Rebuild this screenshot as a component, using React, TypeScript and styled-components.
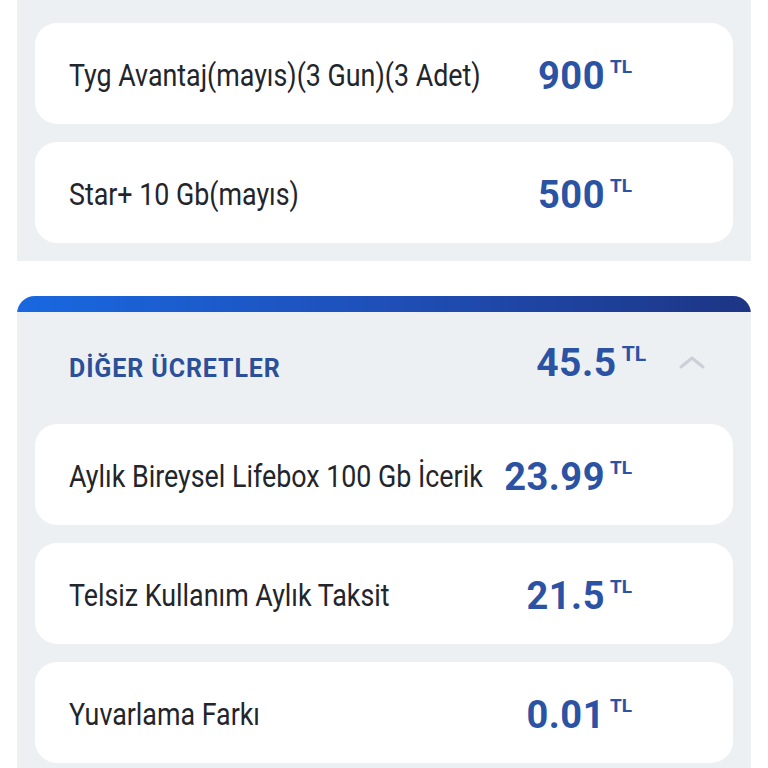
import React from "react";
import styled, { createGlobalStyle } from "styled-components";

const Global = createGlobalStyle`
  html, body { margin: 0; padding: 0; background: #ffffff; }
  body { font-family: Roboto, "Noto Sans", sans-serif; }
`;

const Page = styled.div`
  display: flex;
  flex-direction: column;
  gap: 35px;
  padding: 0 17px;
`;

const Panel = styled.section<{ $top?: boolean }>`
  background: #edf0f3;
  display: flex;
  flex-direction: column;
  border-radius: ${(p) => (p.$top ? "18px 18px 0 0" : "0")};
  overflow: hidden;
`;

const Bar = styled.div`
  height: 16px;
  background: linear-gradient(90deg, #1868e0 0%, #1f4fb8 50%, #1d3584 100%);
`;

const CardList = styled.div<{ $pt: number }>`
  display: flex;
  flex-direction: column;
  gap: 18px;
  padding: ${(p) => p.$pt}px 18px 18px;
`;

const Card = styled.div`
  background: #ffffff;
  border-radius: 22px;
  height: 101px;
  display: flex;
  align-items: center;
  padding: 0 101px 0 34px;
  box-sizing: border-box;
`;

const Label = styled.span`
  flex: 1;
  min-width: 0;
  font-family: Roboto, sans-serif;
  font-size: 31px;
  color: #22252b;
  transform: scaleX(0.865);
  transform-origin: left center;
  white-space: nowrap;
  margin-top: 3px;
`;

const Amount = styled.div<{ $shift: number }>`
  display: flex;
  align-items: flex-start;
  justify-content: flex-end;
  gap: 5px;
  color: #2b52a3;
  margin-top: ${(p) => p.$shift}px;
`;

const Number = styled.span<{ $size: number }>`
  font-family: Roboto, sans-serif;
  font-weight: 700;
  font-size: ${(p) => p.$size}px;
  letter-spacing: 0.5px;
  line-height: 1;
`;

const Unit = styled.span<{ $size: number }>`
  font-family: Roboto, sans-serif;
  font-weight: 700;
  font-size: ${(p) => p.$size}px;
  line-height: 1;
`;

const Header = styled.div`
  height: 112px;
  box-sizing: border-box;
  padding: 0 45px 4px 52px;
  display: flex;
  align-items: center;
`;

const Title = styled.h2`
  margin: 0;
  flex: 1;
  font-family: Roboto, sans-serif;
  font-weight: 700;
  font-size: 25px;
  color: #2b4f98;
  letter-spacing: 0.9px;
  margin-top: 4px;
`;

const Chevron = styled.svg`
  margin-left: 32px;
  width: 28px;
  height: 16px;
  margin-top: -8px;
`;

const Price = ({
  v,
  size = 38,
  unit = 19,
  shift = 4,
}: {
  v: string;
  size?: number;
  unit?: number;
  shift?: number;
}) => (
  <Amount $shift={shift}>
    <Number $size={size}>{v}</Number>
    <Unit $size={unit}>TL</Unit>
  </Amount>
);

const rowsTop = [
  ["Tyg Avantaj(mayıs)(3 Gun)(3 Adet)", "900"],
  ["Star+ 10 Gb(mayıs)", "500"],
];
const rowsOther = [
  ["Aylık Bireysel Lifebox 100 Gb İcerik", "23.99"],
  ["Telsiz Kullanım Aylık Taksit", "21.5"],
  ["Yuvarlama Farkı", "0.01"],
];

export default function App() {
  return (
    <>
      <Global />
      <Page>
        <Panel>
          <CardList $pt={23}>
            {rowsTop.map(([l, v]) => (
              <Card key={l}>
                <Label>{l}</Label>
                <Price v={v} />
              </Card>
            ))}
          </CardList>
        </Panel>
        <Panel $top>
          <Bar />
          <Header>
            <Title>DİĞER ÜCRETLER</Title>
            <Price v="45.5" size={39} unit={21} shift={-6} />
            <Chevron viewBox="0 0 28 16">
              <path d="M3 13 L14 4 L25 13" fill="none" stroke="#cbd0d6" strokeWidth="3" strokeLinecap="round" strokeLinejoin="round" />
            </Chevron>
          </Header>
          <CardList $pt={0}>
            {rowsOther.map(([l, v]) => (
              <Card key={l}>
                <Label>{l}</Label>
                <Price v={v} />
              </Card>
            ))}
          </CardList>
        </Panel>
      </Page>
    </>
  );
}
